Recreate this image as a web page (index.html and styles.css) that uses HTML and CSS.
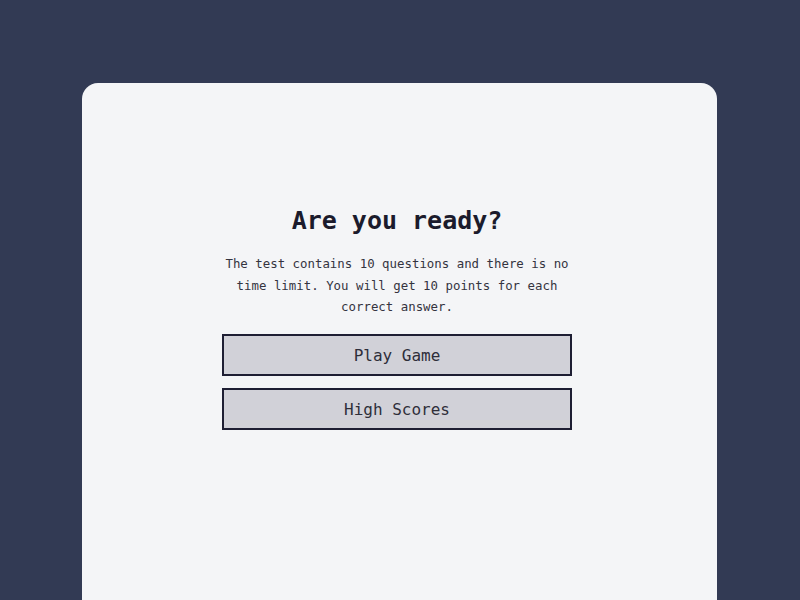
FILE: index.html
```html
<!DOCTYPE html>
<html lang="en">
<head>
<meta charset="utf-8">
<title>Quiz</title>
<link rel="stylesheet" href="styles.css">
</head>
<body>
<main class="card">
  <section class="intro">
    <h1 class="title">Are you ready?</h1>
    <p class="desc">The test contains 10 questions and there is no time limit. You will get 10 points for each correct answer.</p>
    <button class="btn">Play Game</button>
    <button class="btn">High Scores</button>
  </section>
</main>
</body>
</html>
```

FILE: styles.css
```css
html, body {
  margin: 0;
  padding: 0;
  height: 100%;
  overflow: hidden;
}
body {
  background: #323a54;
  font-family: "DejaVu Sans Mono", "Liberation Mono", monospace;
  padding-top: 83px;
  box-sizing: border-box;
}
.card {
  width: 635px;
  height: 517px;
  margin-left: 82px;
  background: #f4f5f7;
  border-radius: 16px 16px 0 0;
  box-sizing: border-box;
  padding: 123px 5px 0 0;
  display: flex;
  justify-content: center;
}
.intro {
  width: 350px;
  display: flex;
  flex-direction: column;
  align-items: stretch;
  text-align: center;
}
.title {
  margin: 0;
  font-size: 25px;
  line-height: 30px;
  font-weight: 700;
  color: #1b1b2c;
}
.desc {
  margin: 17px 0 16px;
  font-size: 12.4px;
  line-height: 21.5px;
  color: #34343f;
}
.btn {
  height: 42px;
  margin: 0 0 12px;
  background: #d1d1d8;
  border: 2px solid #1e1e33;
  font-family: inherit;
  font-size: 16px;
  color: #2e2e3a;
  padding: 2px 0 0;
}
```
